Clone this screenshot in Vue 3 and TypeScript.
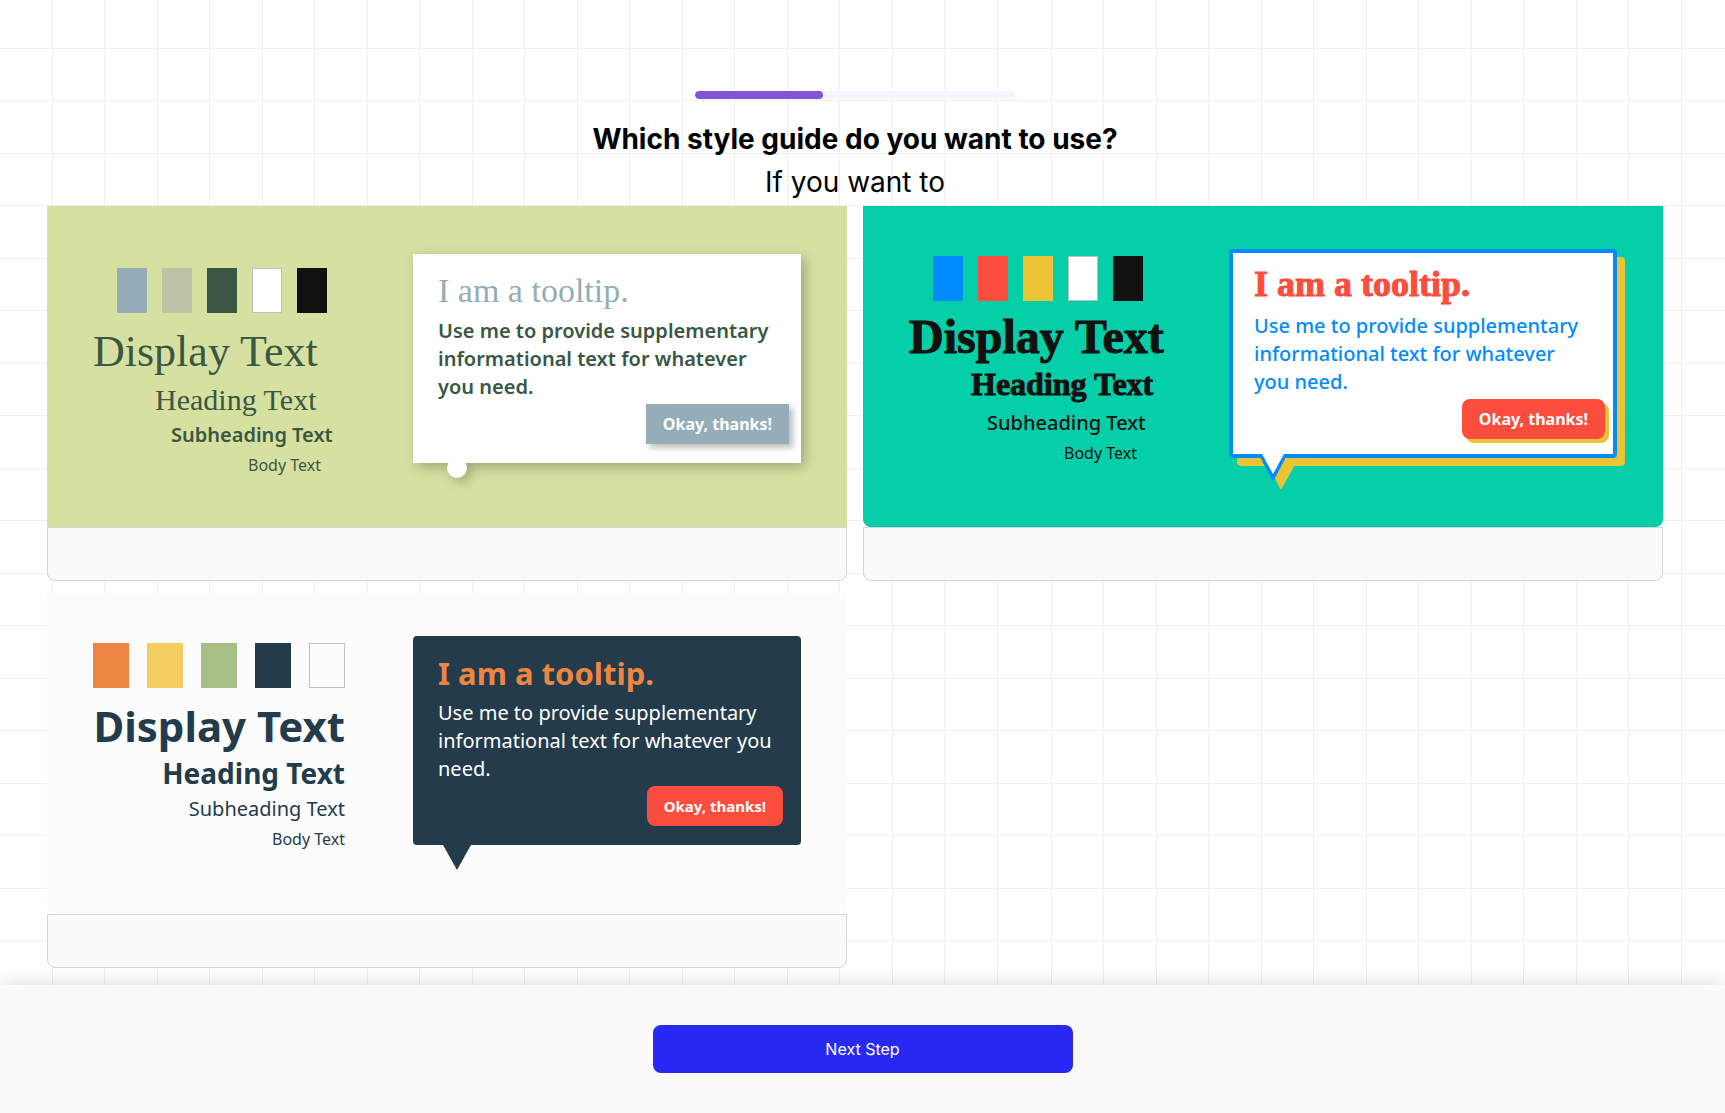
<script setup lang="ts">
interface StyleGuide {
  id: string
  swatches: string[]
}

const progress = 40

const guides: StyleGuide[] = [
  { id: 'meadow', swatches: ['#95adb9', '#bdc2a7', '#3a5743', '#ffffff', '#111111'] },
  { id: 'carnival', swatches: ['#008cff', '#fb4d3d', '#eac435', '#ffffff', '#111111'] },
  { id: 'harbor', swatches: ['#ed8642', '#f4cc5f', '#a6bf87', '#233b4b', '#fcfcfc'] },
]

const isPale = (color: string): boolean => color === '#ffffff' || color === '#fcfcfc'
</script>

<template>
  <div class="page">
    <main class="content">
      <header class="intro">
        <div
          class="progress"
          role="progressbar"
          aria-label="Setup progress"
          :aria-valuenow="progress"
          aria-valuemin="0"
          aria-valuemax="100"
        >
          <div class="progress-fill" :style="{ width: progress + '%' }"></div>
        </div>
        <h1 class="title">Which style guide do you want to use?</h1>
        <p class="subtitle">If you want to</p>
      </header>

      <section class="guides">
        <article v-for="guide in guides" :key="guide.id" class="card" :class="guide.id">
          <div class="preview">
            <div class="specimen">
              <ul class="swatches">
                <li
                  v-for="color in guide.swatches"
                  :key="color"
                  class="swatch"
                  :class="{ pale: isPale(color) }"
                  :style="{ backgroundColor: color }"
                ></li>
              </ul>
              <p class="display">Display Text</p>
              <p class="heading">Heading Text</p>
              <p class="subheading">Subheading Text</p>
              <p class="body-text">Body Text</p>
            </div>

            <div class="tooltip">
              <h2 class="tooltip-title">I am a tooltip.</h2>
              <p class="tooltip-text">
                Use me to provide supplementary informational text for whatever you need.
              </p>
              <button type="button" class="tooltip-button">Okay, thanks!</button>
              <svg v-if="guide.id === 'meadow'" class="tail" width="50" height="40" viewBox="0 0 50 40">
                <circle cx="14" cy="9" r="10" fill="#fff" />
              </svg>
              <svg v-else-if="guide.id === 'carnival'" class="tail" width="50" height="40" viewBox="0 0 50 40">
                <path d="M8 9H37L22 36Z" fill="#eac435" />
                <path d="M0 1L14 28L28 1Z" fill="#008cff" />
                <path d="M3 0L14 20L25 0Z" fill="#fff" />
              </svg>
              <svg v-else class="tail" width="50" height="40" viewBox="0 0 50 40">
                <path d="M0 4L14 29L28 4Z" fill="#233b4b" />
              </svg>
            </div>
          </div>
          <div class="card-footer"></div>
        </article>
      </section>
    </main>

    <footer class="actions">
      <button type="button" class="next">Next Step</button>
    </footer>
  </div>
</template>

<style>
body {
  margin: 0;
}
</style>

<style scoped>
* {
  box-sizing: border-box;
}

.page {
  display: flex;
  flex-direction: column;
  min-height: 100vh;
  font-family: Inter, sans-serif;
  color: #000;
  background-color: #fff;
  background-image: url("data:image/svg+xml,%3Csvg xmlns='http://www.w3.org/2000/svg' width='999' height='1050'%3E%3Cpattern id='g' width='105' height='105' patternUnits='userSpaceOnUse'%3E%3Cpath fill='%23ebf0f3' d='M52 0h1v105h-1zM104 0h1v105h-1zM0 52h105v1H0zM0 104h105v1H0z'/%3E%3C/pattern%3E%3Crect width='999' height='1050' fill='url(%23g)'/%3E%3C/svg%3E");
  background-position: 0 -4px;
}

.content {
  flex: 1;
  padding: 91px 62px 17px 47px;
}

.intro {
  display: flex;
  flex-direction: column;
  align-items: center;
  margin-bottom: 2px;
}

.progress {
  width: 320px;
  height: 8px;
  margin-bottom: 19px;
  border-radius: 4px;
  background: #f8f4fe;
  overflow: hidden;
}

.progress-fill {
  height: 100%;
  border-radius: 4px;
  background: #8055d8;
}

.title,
.subtitle {
  margin: 0;
  font-size: 28px;
  line-height: 43px;
  text-align: center;
}

.title {
  font-weight: 700;
}

.subtitle {
  font-weight: 400;
}

.guides {
  display: grid;
  grid-template-columns: repeat(2, 1fr);
  gap: 12px 16px;
}

.preview {
  display: flex;
  align-items: flex-start;
  height: 321px;
  padding-top: 43px;
  font-family: "Noto Sans", sans-serif;
}

.card-footer {
  height: 54px;
  border: 1px solid #d4d4d4;
  border-radius: 0 0 8px 8px;
  background: #fafafa;
}

.specimen {
  flex: none;
  width: 366px;
  padding: 7px 68px 0 46px;
}

.swatches {
  display: flex;
  gap: 15px;
  margin: 0 0 10px;
  padding: 0 0 0 24px;
  list-style: none;
}

.swatch {
  width: 30px;
  height: 45px;
}

.swatch.pale {
  border: 1px solid #bfbfbf;
}

.specimen p {
  margin: 0;
  white-space: nowrap;
}

.display {
  font-size: 42px;
  line-height: 56px;
}

.heading {
  padding-left: 62px;
  font-size: 28px;
  line-height: 38px;
}

.subheading {
  padding-left: 78px;
  font-size: 20px;
  line-height: 34px;
}

.body-text {
  padding-left: 155px;
  font-size: 16px;
  line-height: 26px;
}

.tooltip {
  position: relative;
  display: flex;
  flex-direction: column;
  flex: none;
  width: 388px;
  height: 209px;
  padding: 15px 25px 0;
  border-radius: 4px;
}

.tooltip-title {
  margin: 0 0 4px;
  font-size: 32px;
  line-height: 44px;
}

.tooltip-text {
  margin: 0 0 3px;
  font-size: 20px;
  line-height: 28px;
}

.tooltip-button {
  align-self: flex-end;
  height: 40px;
  margin-right: -7px;
  padding: 0 17px;
  border: 0;
  border-radius: 8px;
  font-family: inherit;
  font-size: 16px;
  font-weight: 700;
  color: #fff;
  background: #fb4d3d;
}

.tail {
  position: absolute;
  left: 30px;
  top: 205px;
}

/* Meadow */
.meadow .preview {
  padding-top: 48px;
  color: #3a5743;
  background: #d5e0a1;
}

.meadow .specimen {
  padding-top: 14px;
}

.meadow .display {
  font-family: "Liberation Serif", serif;
  font-size: 44px;
  line-height: 58px;
}

.meadow .heading {
  font-family: "Liberation Serif", serif;
  font-size: 30px;
  line-height: 37px;
}

.meadow .subheading,
.meadow .tooltip-text {
  font-weight: 600;
}

.carnival .subheading,
.carnival .tooltip-text {
  font-weight: 500;
}

.meadow .tooltip {
  border-radius: 0;
  background: #fff;
  filter: drop-shadow(4px 4px 6px rgba(0, 0, 0, 0.25));
}

.meadow .tooltip-title {
  font-family: "Liberation Serif", serif;
  font-size: 34px;
  font-weight: 400;
  color: #95adb9;
}

.meadow .tooltip-button,
.carnival .tooltip-button {
  margin-right: -13px;
}

.meadow .tooltip-button {
  border-radius: 0;
  background: #95adb9;
  box-shadow: 4px 4px 6px rgba(0, 0, 0, 0.25);
}

/* Carnival */
.carnival .preview {
  border: 1px solid #00c2ac;
  border-width: 1px 0;
  border-radius: 0 0 8px 8px;
  padding-top: 42px;
  color: #111;
  background: #05cfa8;
}

.carnival .display,
.carnival .heading,
.carnival .tooltip-title {
  font-family: "Liberation Serif", serif;
  font-weight: 700;
  -webkit-text-stroke: 1px currentColor;
}

.carnival .display {
  font-size: 48px;
  line-height: 52px;
}

.carnival .heading {
  font-size: 32px;
  line-height: 43px;
}

.carnival .tooltip {
  padding: 9px 21px 0;
  border: 4px solid #008cff;
  background: #fff;
  box-shadow: 8px 8px 0 #eac435;
}

.carnival .tail {
  left: 26px;
  top: 201px;
}

.carnival .tooltip-title {
  margin-bottom: 6px;
  font-size: 36px;
  color: #fb4d3d;
}

.carnival .tooltip-text {
  color: #008cff;
}

.carnival .tooltip-button {
  box-shadow: 4px 4px 0 #eac435;
}

/* Harbor */
.harbor .preview {
  border-radius: 0 0 8px 8px;
  color: #233b4b;
  background: #fcfcfc;
}

.harbor .swatches {
  gap: 18px;
  padding-left: 0;
}

.harbor .swatch {
  width: 36px;
}

.harbor .specimen p {
  text-align: right;
}

.harbor .display,
.harbor .heading {
  font-weight: 700;
}

.harbor .tooltip {
  color: #fff;
  background: #233b4b;
}

.harbor .tooltip-title {
  font-size: 31px;
  font-weight: 700;
  color: #ed8642;
}

.harbor .tooltip-button {
  font-size: 15px;
}

/* Bottom bar */
.actions {
  position: relative;
  display: flex;
  justify-content: center;
  padding: 40px 0;
  background: #fafafa;
  box-shadow: 0 0 20px rgba(0, 0, 0, 0.15);
}

.next {
  width: 420px;
  height: 48px;
  border: 0;
  border-radius: 8px;
  font-family: inherit;
  font-size: 16px;
  color: #fff;
  background: #2929f5;
}
</style>
